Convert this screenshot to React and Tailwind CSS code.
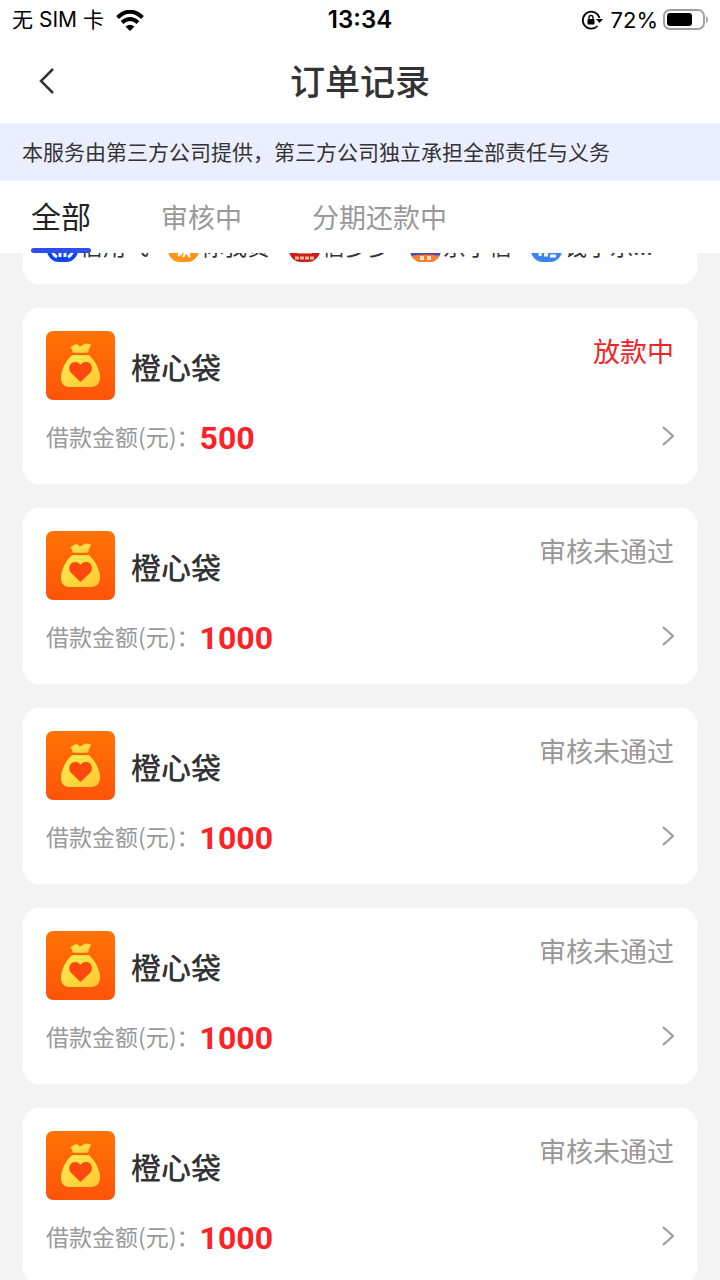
import { useState } from 'react';

const tabs = ['全部', '审核中', '分期还款中'];

const orders = [
  { id: 1, name: '橙心袋', amount: 500, status: '放款中', active: true },
  { id: 2, name: '橙心袋', amount: 1000, status: '审核未通过' },
  { id: 3, name: '橙心袋', amount: 1000, status: '审核未通过' },
  { id: 4, name: '橙心袋', amount: 1000, status: '审核未通过' },
  { id: 5, name: '橙心袋', amount: 1000, status: '审核未通过' },
];

const partners = [
  { name: '信用飞', logo: <CreditLogo /> },
  { name: '你我贷', logo: <OrangeLogo /> },
  { name: '信多多', logo: <RedLogo /> },
  { name: '京小信', logo: <SunsetLogo /> },
  { name: '钱小乐借款', logo: <BlueLogo /> },
];

function CreditLogo() {
  return (
    <svg viewBox="0 0 31 31" className="size-full">
      <rect width="31" height="31" fill="#0b45f5" />
      <path d="M5 19q1 5 5 7M13 16v10M18 16v10M26 19q-1 5-5 7" fill="none" stroke="#fff" strokeWidth="3" />
    </svg>
  );
}

function OrangeLogo() {
  return (
    <svg viewBox="0 0 31 31" className="size-full">
      <rect width="31" height="31" fill="#ff9518" />
      <path d="M11 16v9M10 25l4-3M15 26l5-9M17 20l5 6M21 16v8" fill="none" stroke="#fff" strokeWidth="2" />
    </svg>
  );
}

function RedLogo() {
  return (
    <svg viewBox="0 0 31 31" className="size-full">
      <rect width="31" height="31" fill="#c9201d" />
      <path d="M9 22h14" stroke="#ffe0a0" strokeWidth="1" />
      <path d="M6 27h19" stroke="#f3b79c" strokeWidth="3" strokeDasharray="4 1" />
    </svg>
  );
}

function SunsetLogo() {
  return (
    <svg viewBox="0 0 31 31" className="size-full">
      <rect width="31" height="31" fill="#4a4bb0" />
      <path d="M0 25q15-3 31 0v6H0z" fill="#ff7e28" />
      <path d="M10 27h4M17 27h4" stroke="#ffe3c4" strokeWidth="4" />
    </svg>
  );
}

function BlueLogo() {
  return (
    <svg viewBox="0 0 31 31" className="size-full">
      <rect width="31" height="31" fill="#3b82f0" />
      <path d="M10 16l-1 9M13 24h4M19 25h6M17 18l-2 6" fill="none" stroke="#fff" strokeWidth="3" />
    </svg>
  );
}

function MoneyBag() {
  return (
    <svg viewBox="0 0 69 69" className="size-[69px] shrink-0" aria-hidden="true">
      <defs>
        <linearGradient id="bagBg" x1="0" y1="0" x2="0" y2="1">
          <stop offset="0" stopColor="#ff7304" />
          <stop offset="1" stopColor="#ff540a" />
        </linearGradient>
        <linearGradient id="bagFill" x1="0" y1="0" x2="1" y2="1">
          <stop offset="0" stopColor="#ffee55" />
          <stop offset="1" stopColor="#ffc62e" />
        </linearGradient>
      </defs>
      <rect width="69" height="69" rx="7" fill="url(#bagBg)" />
      <path
        d="M24.500 16.500q2-2 4.500-3 2-.8 3.500.8 1.500 1.800 3 .5l3.500-2q2.500-.8 5 .3 1.500 1 .5 2.700-1.800 2-2 4.500-.2 1.500-1.500 1.500H28q-1.500 0-1.600-1.500-.2-2.500-1.900-3.800z"
        fill="url(#bagFill)"
      />
      <path
        d="M26.500 24h16c5 3.500 11.500 13 11.500 22.500 0 6-4 9.500-8 9.500H23c-5 0-8-3.500-8-9 0-9 5.500-18.500 11.500-23z"
        fill="url(#bagFill)"
      />
      <path
        d="M34.500 34c2-3.500 5.500-3.500 8-2.400 4 2 4.300 6.800 2 9.900L34.500 51 24.700 41.500c-2.300-3.100-2-7.900 2-9.900 2.500-1.100 5.800-1.100 7.800 2.400z"
        fill="#ff480b"
      />
    </svg>
  );
}

function StatusBar() {
  return (
    <div className="grid h-10 shrink-0 grid-cols-3 items-center bg-white px-3 font-['Inter','Noto_Sans_CJK_SC',sans-serif] text-[22px] text-black">
      <div className="flex items-center gap-3">
        <span className="text-[21px] whitespace-nowrap">无 SIM 卡</span>
        <svg viewBox="0 0 28 21" className="h-[21px] w-7" aria-hidden="true">
          <path d="M1.500 7.500Q14-4 26.500 7.500" fill="none" stroke="#000" strokeWidth="4" />
          <path d="M6 12.500q8-7 16 0" fill="none" stroke="#000" strokeWidth="4" />
          <path d="M9.500 16.500q4.500-3.700 9 0L14 21z" />
        </svg>
      </div>
      <span className="text-center text-[24px] font-semibold">13:34</span>
      <div className="flex items-center justify-end gap-1">
        <svg viewBox="0 0 22 22" className="mr-1 size-[22px]" aria-hidden="true">
          <path d="M16.500 17A8.500 8.500 0 1 1 18.500 9" fill="none" stroke="#000" strokeWidth="1.800" />
          <path d="M15 10h7l-3.500 4z" />
          <rect x="6.500" y="10" width="7" height="5.500" rx="1" />
          <path d="M8 10.500V8.500a2 2 0 0 1 4 0v2" fill="none" stroke="#000" strokeWidth="1.300" />
        </svg>
        <span>72%</span>
        <svg viewBox="0 0 46 22" className="h-[22px] w-[46px]" aria-hidden="true">
          <rect x="2" y="1" width="40" height="19" rx="6" fill="none" stroke="#a0a0a0" strokeWidth="2" />
          <rect x="5" y="4" width="25" height="13" rx="3" />
          <path d="M44 7q2 .5 2 3.500t-2 3.500z" fill="#a0a0a0" />
        </svg>
      </div>
    </div>
  );
}

function OrderCard({ order }) {
  return (
    <article className="flex h-44 shrink-0 flex-col rounded-2xl bg-white px-[23px] pt-[23px]">
      <div className="flex items-center gap-4">
        <MoneyBag />
        <h2 className="flex-1 text-[30px] leading-10 font-medium text-[#333]">{order.name}</h2>
        <span className={`self-start text-[27px] leading-10 ${order.active ? 'text-[#f32428]' : 'text-[#999]'}`}>
          {order.status}
        </span>
      </div>
      <div className="mt-3.5 flex items-center">
        <span className="text-[23px] text-[#999]">借款金额(元)：</span>
        <strong className="pt-1 font-['Roboto',sans-serif] text-[32px] leading-10 font-bold text-[#fb2228]">
          {order.amount}
        </strong>
        <button type="button" aria-label="查看订单" className="ml-auto">
          <svg viewBox="0 0 12 20" className="h-5 w-3" aria-hidden="true">
            <path d="M1 1l10 9-10 9" fill="none" stroke="#999" strokeWidth="2" />
          </svg>
        </button>
      </div>
    </article>
  );
}

function App() {
  const [activeTab, setActiveTab] = useState('全部');

  return (
    <div className="flex h-screen flex-col overflow-hidden bg-[#f3f3f3] font-['Noto_Sans_CJK_SC',sans-serif]">
      <StatusBar />

      <header className="grid h-[83px] shrink-0 grid-cols-[48px_1fr_48px] items-center bg-white px-[23px] pb-0.5">
        <button type="button" aria-label="返回" className="flex h-12 items-center pl-4">
          <svg viewBox="0 0 15 26" className="h-[26px] w-[15px]" aria-hidden="true">
            <path d="M14 1L2 13l12 12" fill="none" stroke="#333" strokeWidth="2.500" />
          </svg>
        </button>
        <h1 className="text-center text-[35px] font-medium text-[#333]">订单记录</h1>
      </header>

      <p className="flex h-[58px] shrink-0 items-center bg-[#eaeefe] px-[22px] text-[21px] text-[#333]">
        本服务由第三方公司提供，第三方公司独立承担全部责任与义务
      </p>

      <nav className="z-10 flex h-[72px] shrink-0 gap-[70px] bg-white px-[31px]">
        {tabs.map((tab) => (
          <button
            key={tab}
            type="button"
            onClick={() => setActiveTab(tab)}
            className={`relative ${activeTab === tab ? 'pb-1 text-[30px] text-[#222]' : 'text-[27px] text-[#999]'}`}
          >
            {tab}
            {activeTab === tab && <span className="absolute inset-x-0 bottom-0 h-[5px] rounded-full bg-[#304fe8]" />}
          </button>
        ))}
      </nav>

      <main className="flex min-h-0 flex-1 flex-col gap-6 overflow-hidden px-[23px]">
        {/* partner strip, scrolled partly under the tabs */}
        <section className="-mt-16 h-[95px] shrink-0 rounded-2xl bg-white px-6 pt-[42px]">
          <ul className="flex">
            {partners.map((p) => (
              <li key={p.name} className="flex w-[121px] shrink-0 items-start gap-0.5 last:w-32">
                <span className="size-[31px] shrink-0 overflow-hidden rounded-xl">{p.logo}</span>
                <span className="truncate font-['Inter','Noto_Sans_CJK_SC',sans-serif] text-[23px] leading-8 text-[#333]">
                  {p.name}
                </span>
              </li>
            ))}
          </ul>
        </section>

        {orders.map((order) => (
          <OrderCard key={order.id} order={order} />
        ))}
      </main>
    </div>
  );
}

export default App;
